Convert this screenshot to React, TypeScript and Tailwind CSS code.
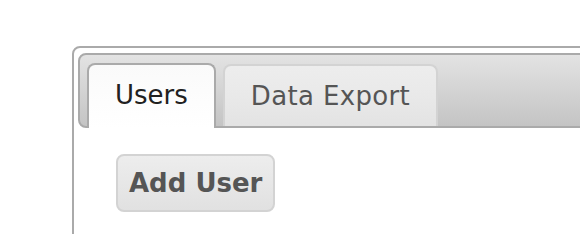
export default function App() {
  return (
    <div className="h-[234px] w-[580px] overflow-hidden bg-white pl-[72px] pt-[46px] font-['DejaVu_Sans',sans-serif]">
      <div className="h-[260px] w-[560px] rounded-[8px] border-2 border-[#aaaaaa] bg-white pl-[4px] pt-[5px]">
        {/* tab strip */}
        <div className="flex h-[75px] w-[560px] items-end gap-[7px] rounded-[8px] border-2 border-[#aaaaaa] bg-linear-to-b from-[#e3e3e3] to-[#c4c4c4] pl-[7px]">
          <div className="-mb-[2px] rounded-t-[8px] border-2 border-b-0 border-[#aaaaaa] bg-linear-to-b from-[#fafafa] to-white px-[26px] pt-[13px] pb-[16px] text-[26px] leading-[34px] text-[#212121]">
            Users
          </div>
          <div className="rounded-t-[8px] border-2 border-b-0 border-[#d3d3d3] bg-linear-to-b from-[#ededed] via-[#e9e9e9] to-[#e3e3e3] px-[26px] py-[13px] text-[26px] leading-[34px] tracking-[0.35px] text-[#555555]">
            Data Export
          </div>
        </div>
        {/* panel */}
        <div className="pl-[38px] pt-[26px]">
          <button className="rounded-[8px] border-2 border-[#d3d3d3] bg-linear-to-b from-[#ededed] to-[#e1e1e1] px-[11px] py-[10px] text-[26px] leading-[34px] font-bold text-[#555555]">
            Add User
          </button>
        </div>
      </div>
    </div>
  );
}
